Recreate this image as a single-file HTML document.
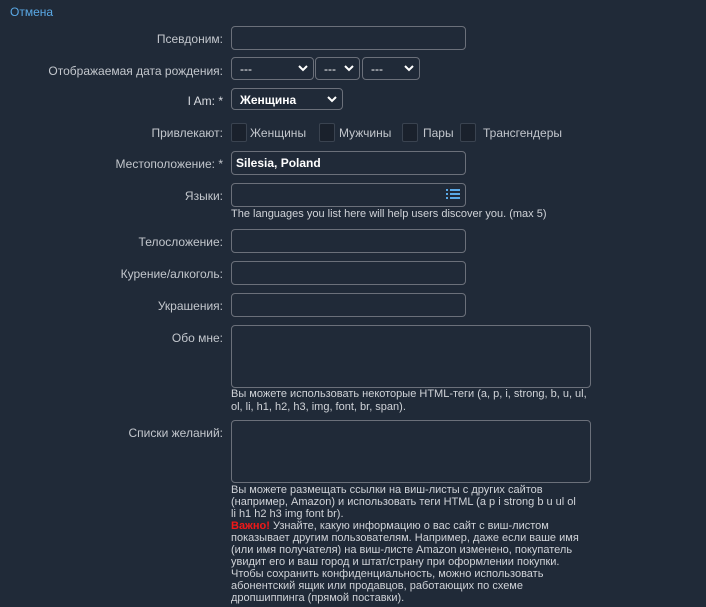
<!DOCTYPE html>
<html><head><meta charset="utf-8"><style>
body{margin:0;width:706px;height:607px;background:#202a38;font-family:"Liberation Sans",Arial,sans-serif;color:#c3c7cd;overflow:hidden;position:relative}
.a{position:absolute}
.l{position:absolute;right:483px;font-size:12px;text-align:right;white-space:nowrap}
.i{position:absolute;border:1px solid #6b707a;border-radius:4px;box-sizing:border-box;background:#202a38}
.s{position:absolute;border:1px solid #6b707a;border-radius:4px;box-sizing:border-box;font-size:12px;color:#fff}
.s span{position:absolute;left:8px;top:4px}
.s svg{position:absolute;right:5px;top:7px}
.cb{position:absolute;width:16px;height:19px;border:1px solid #3a4350;background:#1a212c;box-sizing:border-box;border-radius:2px;top:123px}
.ct{position:absolute;top:126px;font-size:12px}
.h{position:absolute;left:231px;font-size:11px;line-height:13px;color:#d0d3d8;white-space:nowrap}
</style></head><body>
<div class="a" style="left:10px;top:5px;font-size:12px;color:#5aa9e6">Отмена</div>

<div class="l" style="top:32px">Псевдоним:</div>
<div class="i" style="left:231px;top:26px;width:235px;height:24px"></div>

<div class="l" style="top:64px">Отображаемая дата рождения:</div>
<div class="s" style="left:231px;top:57px;width:83px;height:23px"><span>---</span><svg width="10" height="7" viewBox="0 0 10 7"><path d="M1 1l4 4 4-4" stroke="#fff" stroke-width="2" fill="none"/></svg></div>
<div class="s" style="left:315px;top:57px;width:45px;height:23px"><span>---</span><svg width="10" height="7" viewBox="0 0 10 7"><path d="M1 1l4 4 4-4" stroke="#fff" stroke-width="2" fill="none"/></svg></div>
<div class="s" style="left:362px;top:57px;width:58px;height:23px"><span>---</span><svg width="10" height="7" viewBox="0 0 10 7"><path d="M1 1l4 4 4-4" stroke="#fff" stroke-width="2" fill="none"/></svg></div>

<div class="l" style="top:94px;color:#d8dbe0">I Am: *</div>
<div class="s" style="left:231px;top:88px;width:112px;height:22px"><span style="top:4px;font-weight:bold">Женщина</span><svg width="10" height="7" viewBox="0 0 10 7"><path d="M1 1l4 4 4-4" stroke="#fff" stroke-width="2" fill="none"/></svg></div>

<div class="l" style="top:126px">Привлекают:</div>
<div class="cb" style="left:231px"></div><div class="ct" style="left:250px">Женщины</div>
<div class="cb" style="left:319px"></div><div class="ct" style="left:339px">Мужчины</div>
<div class="cb" style="left:402px"></div><div class="ct" style="left:423px">Пары</div>
<div class="cb" style="left:460px"></div><div class="ct" style="left:483px">Трансгендеры</div>

<div class="l" style="top:157px">Местоположение: *</div>
<div class="i" style="left:231px;top:151px;width:235px;height:24px"></div>
<div class="a" style="left:236px;top:156px;font-size:12px;font-weight:bold;color:#fff">Silesia, Poland</div>

<div class="l" style="top:189px">Языки:</div>
<div class="i" style="left:231px;top:183px;width:235px;height:24px"></div>
<svg class="a" style="left:446px;top:188px" width="14" height="12" viewBox="0 0 14 12"><g fill="#5aa9e6"><rect x="0" y="1" width="2" height="2"/><rect x="4" y="1" width="10" height="2"/><rect x="0" y="5" width="2" height="2"/><rect x="4" y="5" width="10" height="2"/><rect x="0" y="9" width="2" height="2"/><rect x="4" y="9" width="10" height="2"/></g></svg>
<div class="h" style="top:208px">The languages you list here will help users discover you. (max 5)</div>

<div class="l" style="top:235px">Телосложение:</div>
<div class="i" style="left:231px;top:229px;width:235px;height:24px"></div>
<div class="l" style="top:267px">Курение/алкоголь:</div>
<div class="i" style="left:231px;top:261px;width:235px;height:24px"></div>
<div class="l" style="top:299px">Украшения:</div>
<div class="i" style="left:231px;top:293px;width:235px;height:24px"></div>

<div class="l" style="top:331px">Обо мне:</div>
<div class="i" style="left:231px;top:325px;width:360px;height:63px"></div>
<div class="h" style="top:388px">Вы можете использовать некоторые HTML-теги (a, p, i, strong, b, u, ul,<br>ol, li, h1, h2, h3, img, font, br, span).</div>

<div class="l" style="top:426px">Списки желаний:</div>
<div class="i" style="left:231px;top:420px;width:360px;height:63px"></div>
<div class="h" style="top:484px;line-height:12px">Вы можете размещать ссылки на виш-листы с других сайтов<br>(например, Amazon) и использовать теги HTML (a p i strong b u ul ol<br>li h1 h2 h3 img font br).<br><b style="color:#f01818">Важно!</b> Узнайте, какую информацию о вас сайт с виш-листом<br>показывает другим пользователям. Например, даже если ваше имя<br>(или имя получателя) на виш-листе Amazon изменено, покупатель<br>увидит его и ваш город и штат/страну при оформлении покупки.<br>Чтобы сохранить конфиденциальность, можно использовать<br>абонентский ящик или продавцов, работающих по схеме<br>дропшиппинга (прямой поставки).</div>
</body></html>
